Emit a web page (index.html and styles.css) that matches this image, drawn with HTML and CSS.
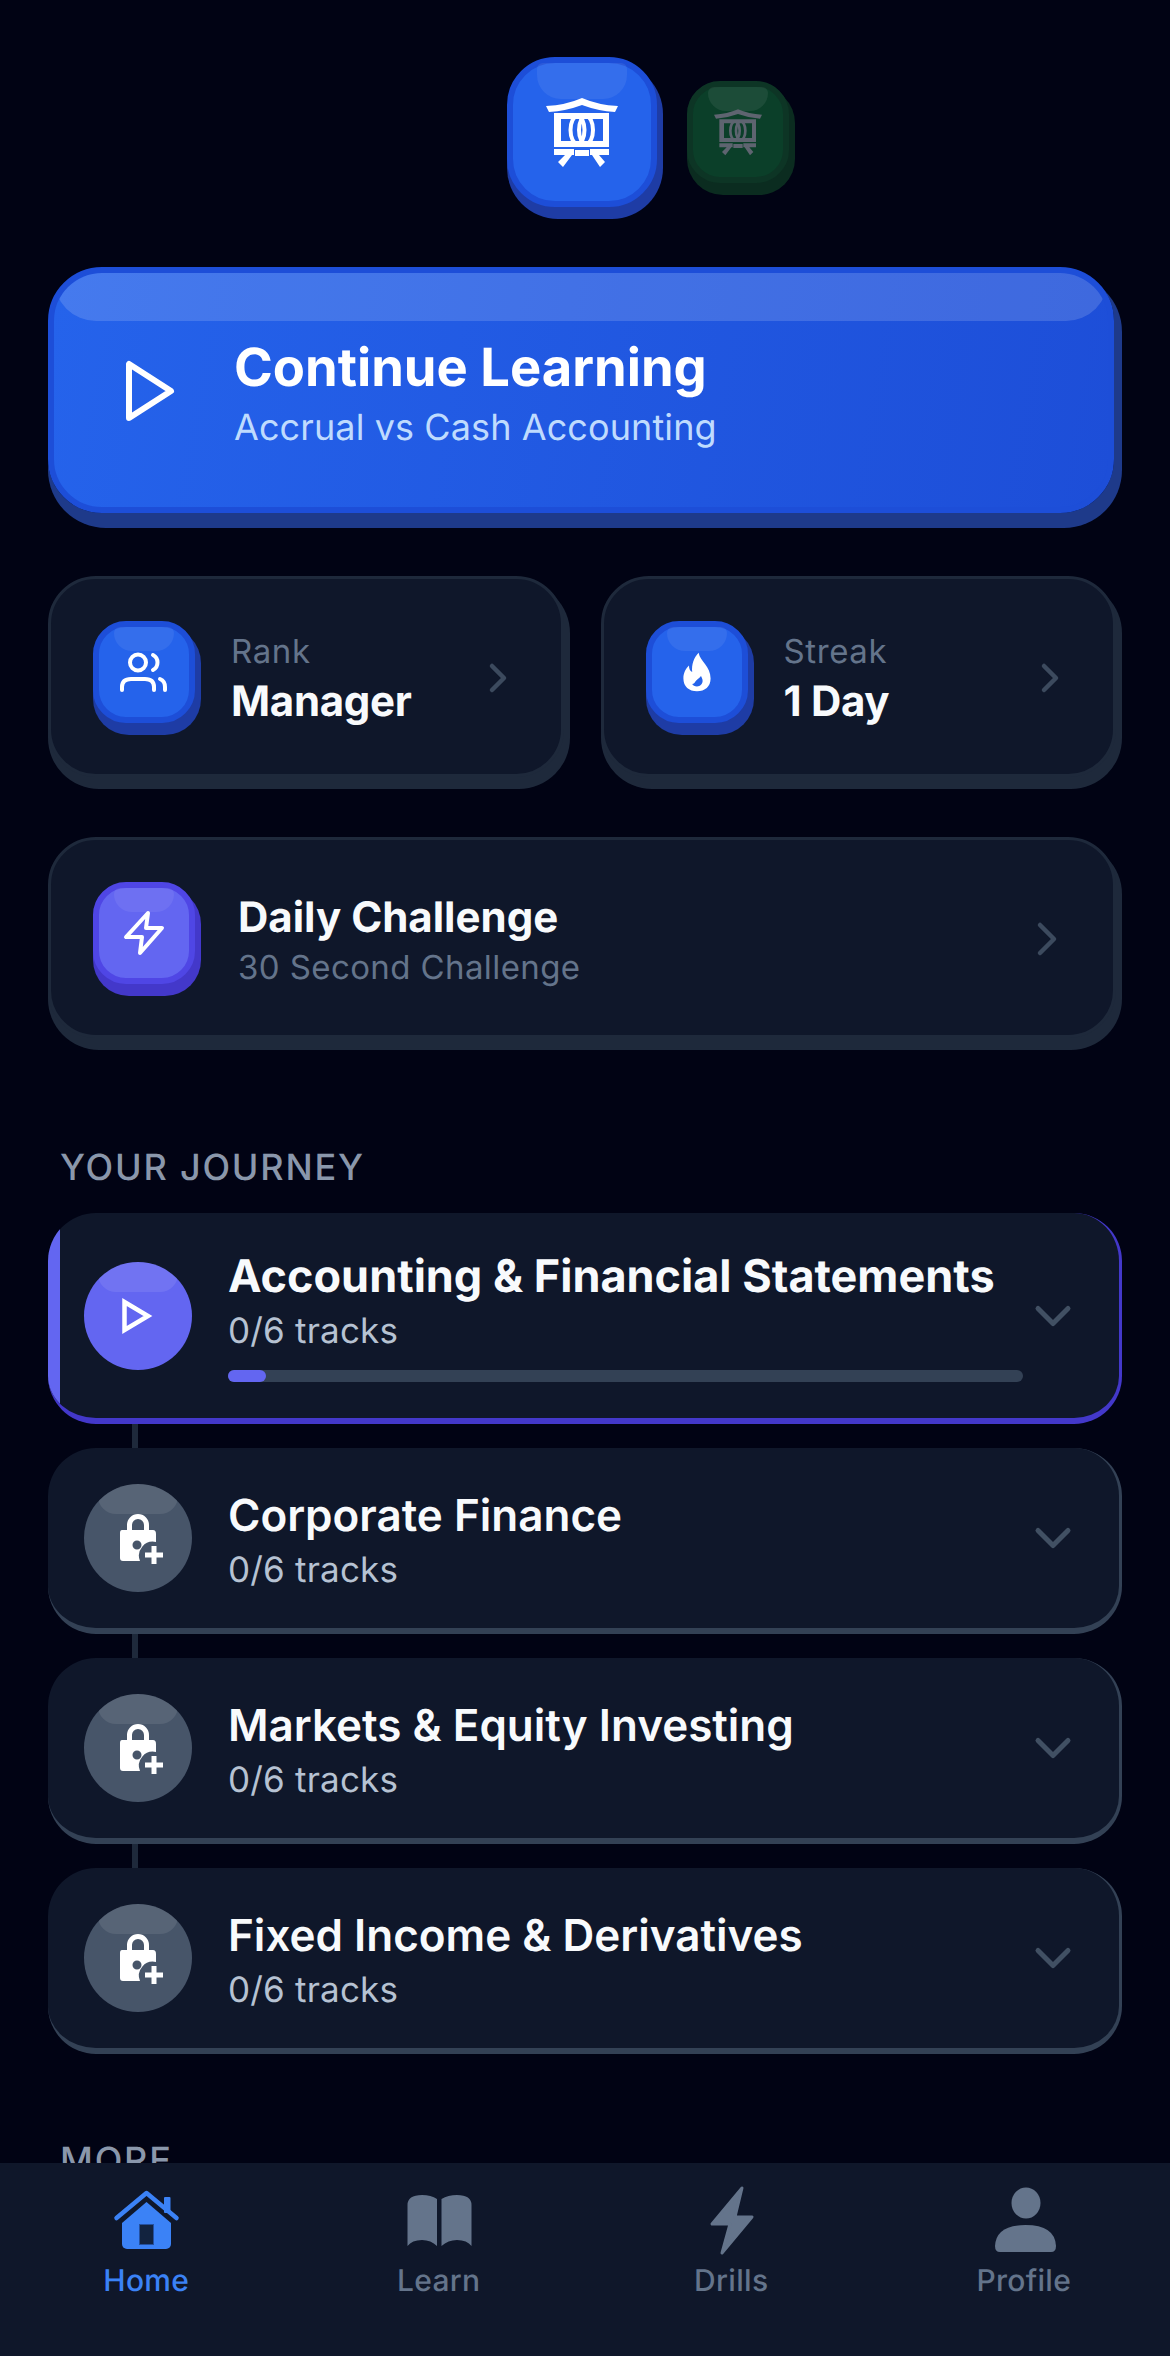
FILE: index.html
```html
<!DOCTYPE html>
<html lang="en">
<head>
  <meta charset="UTF-8" />
  <meta name="viewport" content="width=device-width, initial-scale=1.0" />
  <title>Home</title>
  <link rel="stylesheet" href="styles.css">
</head>
<body>

  <main class="screen">
    <div class="scroll">

      <div class="logos">
        <div class="tile tile-logo">
          <span class="tile-shine"></span>
          <svg class="temple" viewBox="0 0 72 72" fill="#fff">
            <path d="M0 10 Q20 9 36 2 Q52 9 72 10 L69 16 Q52 15 36 9 Q20 15 3 16 Z"/>
            <path fill-rule="evenodd" d="M8 17 H63 V51 H8 Z M15 23 V45 H57 V23 Z"/>
            <ellipse cx="31.5" cy="34" rx="7" ry="14" fill="none" stroke="#fff" stroke-width="4"/>
            <ellipse cx="40" cy="34" rx="7" ry="14" fill="none" stroke="#fff" stroke-width="4"/>
            <path d="M8 53 H28 V59 H26 L17 71 L12 66 L19 59 H8 Z M29 54 H43 V60 H29 Z M44 53 H63 V59 H53 L59 66 L54 71 L46 59 H44 Z"/>
          </svg>
        </div>
        <div class="tile tile-green">
          <span class="tile-shine"></span>
          <svg class="temple temple-small" viewBox="0 0 72 72" fill="#5e6470">
            <path d="M0 10 Q20 9 36 2 Q52 9 72 10 L69 16 Q52 15 36 9 Q20 15 3 16 Z"/>
            <path fill-rule="evenodd" d="M8 17 H63 V51 H8 Z M15 23 V45 H57 V23 Z"/>
            <ellipse cx="31.5" cy="34" rx="7" ry="14" fill="none" stroke="#5e6470" stroke-width="4"/>
            <ellipse cx="40" cy="34" rx="7" ry="14" fill="none" stroke="#5e6470" stroke-width="4"/>
            <path d="M8 53 H28 V59 H26 L17 71 L12 66 L19 59 H8 Z M29 54 H43 V60 H29 Z M44 53 H63 V59 H53 L59 66 L54 71 L46 59 H44 Z"/>
          </svg>
        </div>
      </div>

      <div class="continue">
        <span class="continue-shine"></span>
        <svg class="continue-play" viewBox="0 0 60 72" fill="none" stroke="#fff" stroke-width="6" stroke-linejoin="round">
          <path d="M9 10 V64 L51 37 Z"/>
        </svg>
        <div class="continue-text">
          <div class="continue-title">Continue Learning</div>
          <div class="continue-sub">Accrual vs Cash Accounting</div>
        </div>
      </div>

      <div class="stat-row">
        <div class="card stat">
          <div class="tile tile-blue">
            <span class="tile-shine"></span>
            <svg class="tile-icon" viewBox="0 0 54 54" fill="none" stroke="#fff" stroke-width="4" stroke-linecap="round">
              <circle cx="21" cy="17.5" r="8"/>
              <path d="M36 10 A8.5 8.5 0 0 1 36 25"/>
              <path d="M5 45 V42 Q5 34 14 34 H28 Q37 34 37 42 V45"/>
              <path d="M43 34 Q48 36 48 42 V45"/>
            </svg>
          </div>
          <div class="stat-text">
            <div class="stat-label">Rank</div>
            <div class="stat-value">Manager</div>
          </div>
          <svg class="chev-right" viewBox="0 0 24 36" fill="none" stroke="#3c4a5e" stroke-width="4.5" stroke-linecap="round" stroke-linejoin="round">
            <path d="M6 6 L18 18 L6 30"/>
          </svg>
        </div>
        <div class="card stat">
          <div class="tile tile-blue">
            <span class="tile-shine"></span>
            <svg class="tile-icon" viewBox="0 0 54 54" fill="#fff">
              <path transform="translate(5.4 5.4) scale(0.8)" fill-rule="evenodd" d="M29 3 C31 14 44 20 44 35 C44 45 37 51 27 51 C17 51 10 45 10 35 C10 28 13 23 17 19 C17 23 18 26 21 27 C20 18 23 9 29 3 Z M27 45 C31 45 34 42 34 38 C34 36 33 34 32 32 C30 35 27 36 25 39 C24 41 23 42 21 42 C22 44 24 45 27 45 Z"/>
            </svg>
          </div>
          <div class="stat-text">
            <div class="stat-label">Streak</div>
            <div class="stat-value">1 Day</div>
          </div>
          <svg class="chev-right" viewBox="0 0 24 36" fill="none" stroke="#3c4a5e" stroke-width="4.5" stroke-linecap="round" stroke-linejoin="round">
            <path d="M6 6 L18 18 L6 30"/>
          </svg>
        </div>
      </div>

      <div class="card challenge">
        <div class="tile tile-purple">
          <span class="tile-shine"></span>
          <svg class="tile-icon" viewBox="0 0 54 54" fill="none" stroke="#fff" stroke-width="4" stroke-linejoin="round" stroke-linecap="round">
            <path d="M31 7 L9 31 H25 L23 47 L45 22 H29 Z"/>
          </svg>
        </div>
        <div class="challenge-text">
          <div class="challenge-title">Daily Challenge</div>
          <div class="challenge-sub">30 Second Challenge</div>
        </div>
        <svg class="chev-right chev-lg" viewBox="0 0 24 36" fill="none" stroke="#3c4a5e" stroke-width="4.5" stroke-linecap="round" stroke-linejoin="round">
          <path d="M5 4 L19 18 L5 32"/>
        </svg>
      </div>

      <h2 class="section-title section-journey">YOUR JOURNEY</h2>

      <div class="journey">
        <div class="course course-active">
          <div class="course-badge badge-play">
            <svg class="badge-icon" viewBox="0 0 54 54" fill="none" stroke="#fff" stroke-width="4.5" stroke-linejoin="miter">
              <path d="M13.5 13 V41 L37 27 Z"/>
            </svg>
          </div>
          <div class="course-text">
            <div class="course-title">Accounting &amp; Financial Statements</div>
            <div class="course-sub">0/6 tracks</div>
            <div class="progress"><div class="progress-fill" style="width: 38px"></div></div>
          </div>
          <svg class="chev-down" viewBox="0 0 60 60" fill="none" stroke="#415063" stroke-width="5" stroke-linecap="round" stroke-linejoin="round">
            <path d="M15 22.5 L30 37.5 L45 22.5"/>
          </svg>
        </div>
        <div class="link"></div>

        <div class="course">
          <div class="course-badge">
            <svg class="badge-icon" viewBox="0 0 54 54" fill="#fff">
              <path fill-rule="evenodd" d="M11 19 H16 V14 A11 11 0 0 1 38 14 V19 H42 Q45 19 45 23 V31 A14 14 0 0 0 29 50 H12 Q9 50 9 47 V22 Q9 19 11 19 Z M21 19 H33 V14 A6 6 0 0 0 21 14 Z M26 29.5 A4.5 4.5 0 1 0 26 38.5 A4.5 4.5 0 1 0 26 29.5 Z"/>
              <path d="M40.5 35 H45.5 V41.5 H52 V46.5 H45.5 V53 H40.5 V46.5 H34 V41.5 H40.5 Z"/>
            </svg>
          </div>
          <div class="course-text">
            <div class="course-title">Corporate Finance</div>
            <div class="course-sub">0/6 tracks</div>
          </div>
          <svg class="chev-down" viewBox="0 0 60 60" fill="none" stroke="#415063" stroke-width="5" stroke-linecap="round" stroke-linejoin="round">
            <path d="M15 22.5 L30 37.5 L45 22.5"/>
          </svg>
        </div>
        <div class="link"></div>

        <div class="course">
          <div class="course-badge">
            <svg class="badge-icon" viewBox="0 0 54 54" fill="#fff">
              <path fill-rule="evenodd" d="M11 19 H16 V14 A11 11 0 0 1 38 14 V19 H42 Q45 19 45 23 V31 A14 14 0 0 0 29 50 H12 Q9 50 9 47 V22 Q9 19 11 19 Z M21 19 H33 V14 A6 6 0 0 0 21 14 Z M26 29.5 A4.5 4.5 0 1 0 26 38.5 A4.5 4.5 0 1 0 26 29.5 Z"/>
              <path d="M40.5 35 H45.5 V41.5 H52 V46.5 H45.5 V53 H40.5 V46.5 H34 V41.5 H40.5 Z"/>
            </svg>
          </div>
          <div class="course-text">
            <div class="course-title">Markets &amp; Equity Investing</div>
            <div class="course-sub">0/6 tracks</div>
          </div>
          <svg class="chev-down" viewBox="0 0 60 60" fill="none" stroke="#415063" stroke-width="5" stroke-linecap="round" stroke-linejoin="round">
            <path d="M15 22.5 L30 37.5 L45 22.5"/>
          </svg>
        </div>
        <div class="link"></div>

        <div class="course">
          <div class="course-badge">
            <svg class="badge-icon" viewBox="0 0 54 54" fill="#fff">
              <path fill-rule="evenodd" d="M11 19 H16 V14 A11 11 0 0 1 38 14 V19 H42 Q45 19 45 23 V31 A14 14 0 0 0 29 50 H12 Q9 50 9 47 V22 Q9 19 11 19 Z M21 19 H33 V14 A6 6 0 0 0 21 14 Z M26 29.5 A4.5 4.5 0 1 0 26 38.5 A4.5 4.5 0 1 0 26 29.5 Z"/>
              <path d="M40.5 35 H45.5 V41.5 H52 V46.5 H45.5 V53 H40.5 V46.5 H34 V41.5 H40.5 Z"/>
            </svg>
          </div>
          <div class="course-text">
            <div class="course-title">Fixed Income &amp; Derivatives</div>
            <div class="course-sub">0/6 tracks</div>
          </div>
          <svg class="chev-down" viewBox="0 0 60 60" fill="none" stroke="#415063" stroke-width="5" stroke-linecap="round" stroke-linejoin="round">
            <path d="M15 22.5 L30 37.5 L45 22.5"/>
          </svg>
        </div>
      </div>

      <h2 class="section-title section-more">MORE</h2>
    </div>

    <nav class="tabbar">
      <a class="tab tab-on">
        <svg class="tab-icon" viewBox="0 0 72 72">
          <rect x="54" y="13" width="6.5" height="16" rx="1" fill="#3b82f6"/>
          <path d="M36.5 18 L61 39 V60 A5 5 0 0 1 56 65 H17 A5 5 0 0 1 12 60 V39 Z" fill="#3b82f6"/>
          <path d="M6.5 34 L36.5 9 L66.5 34" fill="none" stroke="#3b82f6" stroke-width="4.5" stroke-linecap="round" stroke-linejoin="round"/>
          <rect x="29.5" y="40.5" width="14" height="20" fill="#12233f" stroke="#24509f" stroke-width="1"/>
        </svg>
        <span>Home</span>
      </a>
      <a class="tab">
        <svg class="tab-icon" viewBox="0 0 72 72" fill="#64748b">
          <path d="M4.5 21 Q4.5 11 19 11 Q28 11 34 15 V62 Q28 56 19 56 Q9 56 4.5 62 Z"/>
          <path d="M68.5 21 Q68.5 11 54 11 Q45 11 38.5 15 V62 Q45 56 54 56 Q64 56 68.5 62 Z"/>
        </svg>
        <span>Learn</span>
      </a>
      <a class="tab">
        <svg class="tab-icon" viewBox="0 0 72 72" fill="#64748b" stroke="#64748b" stroke-width="3" stroke-linejoin="round">
          <path d="M47 4 L17 40 H35 L27 69 L57 33 H40 Z"/>
        </svg>
        <span>Drills</span>
      </a>
      <a class="tab">
        <svg class="tab-icon" viewBox="0 0 72 72" fill="#64748b">
          <ellipse cx="38" cy="19" rx="14.5" ry="15.5"/>
          <path d="M7 62 Q8 41 37.5 41 Q67 41 68 62 Q68 68 63 68 H12 Q7 68 7 62 Z"/>
        </svg>
        <span>Profile</span>
      </a>
    </nav>
  </main>

</body>
</html>
```

FILE: styles.css
```css
/* Global */
* {
  box-sizing: border-box;
}
html, body {
  margin: 0;
  padding: 0;
  background-color: #020617;
}
body {
  font-family: Inter, "Noto Sans", sans-serif;
  color: #f8fafc;
  text-rendering: geometricPrecision;
}
.screen {
  width: 1170px;
  height: 2356px;
  display: flex;
  flex-direction: column;
  overflow: hidden;
  background-color: #010314;
}
.scroll {
  flex: 1;
  min-height: 0;
  overflow: hidden;
  padding: 57px 48px 0;
}

/* Square 3D tiles */
.tile {
  position: relative;
  flex-shrink: 0;
  width: 102px;
  height: 102px;
  margin: 0 6px 12px 0;
  display: flex;
  align-items: center;
  justify-content: center;
  border: 6px solid #1d4ed8;
  border-radius: 33px;
  background-color: #2563eb;
  box-shadow: 3px 9px 0 3px #1e3ca5;
}
.tile-shine {
  position: absolute;
  top: 0;
  left: 15px;
  width: 60px;
  height: 24px;
  border-radius: 6px 6px 18px 18px;
  background-color: rgba(255, 255, 255, 0.07);
}
.tile-icon {
  position: relative;
  width: 54px;
  height: 54px;
}
.tile-purple {
  border-color: #4f46e5;
  background-color: #6366f1;
  box-shadow: 3px 9px 0 3px #4338ca;
}

/* Logos row */
.logos {
  display: flex;
  align-items: center;
  gap: 24px;
  height: 162px;
  padding-left: 459px;
}
.tile-logo {
  width: 150px;
  height: 150px;
  margin: 0 6px 12px 0;
  border-radius: 48px;
}
.tile-logo .tile-shine {
  left: 24px;
  width: 90px;
  height: 36px;
  border-radius: 6px 6px 24px 24px;
}
.temple {
  position: relative;
  width: 72px;
  height: 72px;
}
.temple-small {
  width: 48px;
  height: 48px;
}
.tile-green {
  border-color: #0d3525;
  background-color: #0b3f29;
  box-shadow: 3px 9px 0 3px #0b2c20;
}

/* Continue button */
.continue {
  position: relative;
  display: flex;
  align-items: center;
  height: 246px;
  margin: 48px 8px 0 0;
  padding: 0 0 0 66px;
  border: 6px solid #1d4ed8;
  border-radius: 54px;
  background: linear-gradient(100deg, #2563eb, #1d4ed8);
  box-shadow: 4px 11px 0 4px #1e3a8a;
  overflow: hidden;
}
.continue-shine {
  position: absolute;
  top: 0;
  left: 0;
  right: 0;
  height: 48px;
  border-radius: 0 0 42px 42px;
  background-color: rgba(255, 255, 255, 0.15);
}
.continue-play {
  flex-shrink: 0;
  width: 60px;
  height: 72px;
}
.continue-text {
  margin-left: 54px;
  padding-top: 4.5px;
}
.continue-title {
  font-size: 52.5px;
  line-height: 66px;
  font-weight: 700;
  color: #fff;
}
.continue-sub {
  margin-top: 3.5px;
  font-size: 36px;
  line-height: 48px;
  letter-spacing: 0.1px;
  color: #bfdbfe;
}

/* Dark cards */
.card {
  display: flex;
  align-items: center;
  border: 3px solid #1e293b;
  border-radius: 48px;
  background-color: #0f172a;
  box-shadow: 3px 9px 0 3px #1e293b;
}
.stat-row {
  display: flex;
  gap: 31px;
  margin-top: 63px;
}
.stat {
  flex: 1;
  height: 201px;
  margin: 0 6px 12px 0;
  padding: 3px 0 0 42px;
}
.stat-text {
  flex: 1;
  margin-left: 30px;
  padding-top: 3px;
}
.stat-label {
  font-size: 33px;
  line-height: 42px;
  letter-spacing: 0.6px;
  color: #64748b;
}
.stat-value {
  margin-top: 3px;
  font-size: 42px;
  line-height: 54px;
  font-weight: 700;
  letter-spacing: -0.3px;
  color: #f8fafc;
}
.chev-right {
  flex-shrink: 0;
  width: 24px;
  height: 36px;
  margin-right: 51px;
}
.chev-lg {
  margin-right: 54px;
}
.challenge {
  height: 201px;
  margin: 48px 6px 0 0;
  padding: 3px 0 0 42px;
}
.challenge-text {
  flex: 1;
  margin-left: 37px;
}
.challenge-title {
  font-size: 42px;
  line-height: 54px;
  font-weight: 700;
  color: #f8fafc;
}
.challenge-sub {
  margin-top: 1px;
  font-size: 33px;
  line-height: 42px;
  letter-spacing: 0.4px;
  color: #64748b;
}

/* Section headings */
.section-title {
  margin: 0;
  padding-left: 12px;
  font-size: 36px;
  line-height: 42px;
  font-weight: 500;
  letter-spacing: 1.8px;
  color: #8a97ab;
}
.section-journey {
  margin-top: 108px;
}
.section-more {
  margin-top: 85px;
}

/* Journey list */
.journey {
  margin-top: 25px;
  display: flex;
  flex-direction: column;
}
.course {
  position: relative;
  display: flex;
  align-items: center;
  padding: 36px;
  border-style: solid;
  border-width: 0 3px 6px 0;
  border-color: #334155;
  border-radius: 48px;
  background-color: #0f172a;
  overflow: hidden;
}
.course-active {
  border-color: #4338ca;
}
.course-active::before {
  content: "";
  position: absolute;
  top: 0;
  bottom: 0;
  left: 0;
  width: 12px;
  background-color: #6366f1;
}
.course-badge {
  position: relative;
  flex-shrink: 0;
  width: 108px;
  height: 108px;
  display: flex;
  align-items: center;
  justify-content: center;
  border-radius: 50%;
  background-color: #475569;
  overflow: hidden;
}
.course-badge::before {
  content: "";
  position: absolute;
  top: 0;
  left: 14px;
  width: 80px;
  height: 30px;
  border-radius: 0 0 18px 18px;
  background-color: rgba(255, 255, 255, 0.09);
}
.badge-play {
  background-color: #6366f1;
}
.badge-icon {
  position: relative;
  width: 54px;
  height: 54px;
}
.course-text {
  flex: 1;
  min-width: 0;
  margin-left: 36px;
  padding-top: 3px;
}
.course-active .course-text {
  padding-top: 0;
}
.course-title {
  font-size: 44px;
  line-height: 54px;
  font-weight: 600;
  color: #f8fafc;
}
.course-active .course-title {
  font-weight: 700;
  font-size: 45px;
}
.course-sub {
  margin-top: 6px;
  font-size: 35px;
  line-height: 44px;
  letter-spacing: 0.2px;
  color: #b6c2d2;
}
.progress {
  margin-top: 17px;
  height: 12px;
  border-radius: 6px;
  background-color: #334155;
}
.progress-fill {
  height: 100%;
  border-radius: 6px;
  background-color: #6366f1;
}
.chev-down {
  flex-shrink: 0;
  width: 60px;
  height: 60px;
}
.link {
  width: 6px;
  height: 24px;
  margin-left: 84px;
  background-color: #1e293b;
}

/* Bottom tab bar */
.tabbar {
  flex-shrink: 0;
  height: 193px;
  display: flex;
  padding-top: 21px;
  background-color: #0f172a;
}
.tab {
  flex: 1;
  display: flex;
  flex-direction: column;
  align-items: center;
  font-size: 30px;
  line-height: 36px;
  font-weight: 500;
  letter-spacing: 0.3px;
  color: #64748b;
}
.tab-on {
  color: #3b82f6;
}
.tab-icon {
  width: 72px;
  height: 72px;
  margin-bottom: 7px;
}
```
